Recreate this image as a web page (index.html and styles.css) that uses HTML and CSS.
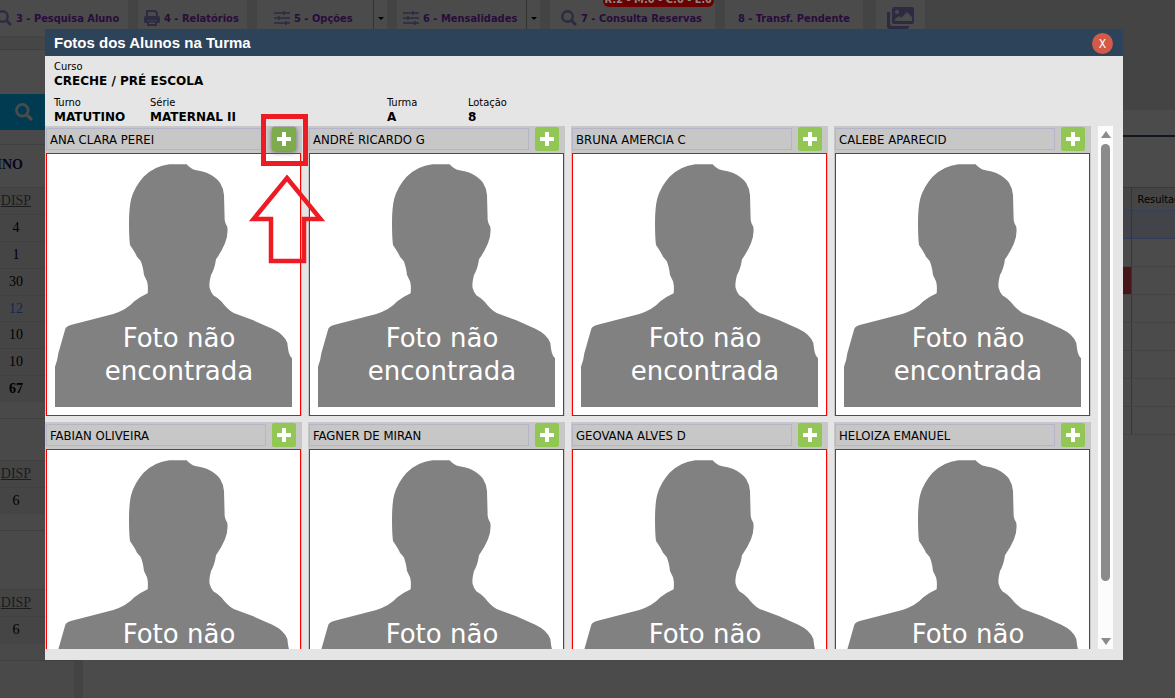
FILE: index.html
```
<!DOCTYPE html>
<html lang="pt-BR">
  <head>
    <meta charset="utf-8">
    <title>Fotos dos Alunos na Turma</title>
    <link rel="stylesheet" href="styles.css">
  </head>
  <body>
    <svg class="defs">
      <symbol id="person" viewBox="0 0 759 783">
        <path d="M367 31H419Q430 45 448 49Q464 52 479 56Q506 68 519 86Q530 104 531 123L533 198Q534 208 541 219Q544 244 534 268Q524 292 507 316Q503 345 492 363Q485 388 488 402Q491 414 499 424Q510 430 524 443Q541 466 560 477L619 499L676 524Q712 541 721 567C724 590 724 600 735 613V759H24V638Q32 618 34 598L55 524Q58 516 74 512L199 480Q240 467 262 442Q280 428 302 418Q304 395 300 382L291 363Q288 337 281 321L270 308Q264 295 249 273Q246 250 246 208Q246 160 253 133Q262 100 289 69Q322 36 367 31Z"/>
      </symbol>
      <symbol id="plus" viewBox="0 0 16 16">
        <path d="M6 1.500Q6 1 6.500 1H9.500Q10 1 10 1.500V6H14.500Q15 6 15 6.500V9.500Q15 10 14.500 10H10V14.500Q10 15 9.500 15H6.500Q6 15 6 14.500V10H1.500Q1 10 1 9.500V6.500Q1 6 1.500 6H6Z"/>
      </symbol>
      <symbol id="search" viewBox="0 0 16 16">
        <path d="M10.300 10.300L15 15" fill="none" stroke="currentColor" stroke-width="3"/>
        <circle cx="6.500" cy="6.500" r="5.200" fill="none" stroke="currentColor" stroke-width="2.400"/>
      </symbol>
      <symbol id="sliders" viewBox="0 0 16 16">
        <path d="M0 3H16M0 8H16M0 13H16M10 1V5M5 6V10M12 11V15" fill="none" stroke="currentColor" stroke-width="1.500"/>
      </symbol>
      <symbol id="print" viewBox="0 0 16 16">
        <path d="M3 7V1H11L13 3V7M4 11.500H12V15H4Z" fill="none" stroke="currentColor" stroke-width="2"/>
        <path d="M2 6H14Q16 6 16 8V13H13V10H3V13H0V8Q0 6 2 6Z"/>
      </symbol>
      <symbol id="images" viewBox="0 0 27 22">
        <path d="M0 6Q0 5 1 5H3V17Q3 19 5 19H22V20Q22 22 20 22H3Q0 22 0 19Z"/>
        <path fill-rule="evenodd" d="M7 0H25Q27 0 27 2V15Q27 17 25 17H7Q5 17 5 15V2Q5 0 7 0ZM8 14H25V10L20 5L14 11L12 9L8 12ZM10 3A2 2 0 1 0 10 7A2 2 0 1 0 10 3Z"/>
      </symbol>
    </svg>

    <nav class="toolbar">
      <button class="tool tool-search"><svg class="icon"><use href="#search"/></svg>3 - Pesquisa Aluno</button>
      <button class="tool tool-report"><svg class="icon"><use href="#print"/></svg>4 - Relatórios</button>
      <div class="split">
        <button class="tool tool-options"><svg class="icon"><use href="#sliders"/></svg>5 - Opções</button>
        <button class="caret" aria-label="Mais opções"></button>
      </div>
      <div class="split">
        <button class="tool tool-fees"><svg class="icon"><use href="#sliders"/></svg>6 - Mensalidades</button>
        <button class="caret" aria-label="Mais mensalidades"></button>
      </div>
      <button class="tool tool-reserve"><svg class="icon"><use href="#search"/></svg>7 - Consulta Reservas<span class="badge">R:2 - M:0 - C:0 - L:0</span></button>
      <button class="tool tool-transfer">8 - Transf. Pendente</button>
      <button class="tool tool-images" aria-label="Fotos"><svg class="icon-images"><use href="#images"/></svg></button>
    </nav>

    <div class="page">
      <aside class="sidebar">
        <div class="sidebar-top"></div>
        <button class="search-btn" aria-label="Pesquisar"><svg class="icon"><use href="#search"/></svg></button>
        <div class="shift"><span>MATUTINO</span></div>
        <table class="seats">
          <tr><th><a href="#">DISP</a></th></tr>
          <tr><td>4</td></tr>
          <tr><td>1</td></tr>
          <tr><td>30</td></tr>
          <tr><td class="blue">12</td></tr>
          <tr><td>10</td></tr>
          <tr><td>10</td></tr>
          <tr><td class="total">67</td></tr>
        </table>
        <div class="spacer"></div>
        <table class="seats">
          <tr><th><a href="#">DISP</a></th></tr>
          <tr><td>6</td></tr>
        </table>
        <div class="spacer spacer-tall"></div>
        <table class="seats">
          <tr><th><a href="#">DISP</a></th></tr>
          <tr><td>6</td></tr>
        </table>
        <div class="sidebar-end"></div>
      </aside>
      <main class="content">
        <div class="content-title"></div>
        <table class="results">
          <tr><th></th><th class="result-col">Resultado</th></tr>
          <tr class="selected"><td></td><td></td></tr>
          <tr><td></td><td></td></tr>
          <tr><td class="alert"></td><td></td></tr>
          <tr><td></td><td></td></tr>
          <tr><td></td><td></td></tr>
          <tr><td></td><td></td></tr>
          <tr><td></td><td></td></tr>
          <tr><td></td><td></td></tr>
        </table>
      </main>
    </div>

    <div class="overlay">
      <section class="modal" role="dialog" aria-labelledby="modalTitle">
        <header class="modal-header">
          <h1 id="modalTitle">Fotos dos Alunos na Turma</h1>
          <button class="close">X</button>
        </header>

        <dl class="info">
          <div class="info-course"><dt>Curso</dt><dd>CRECHE / PRÉ ESCOLA</dd></div>
          <div><dt>Turno</dt><dd>MATUTINO</dd></div>
          <div><dt>Série</dt><dd>MATERNAL II</dd></div>
          <div><dt>Turma</dt><dd>A</dd></div>
          <div><dt>Lotação</dt><dd>8</dd></div>
        </dl>

        <div class="photos">
          <div class="cards">
            <article class="card">
              <div class="card-head"><input type="text" value="ANA CLARA PEREI" aria-label="Aluno" readonly><button class="add active" aria-label="Adicionar foto"><svg><use href="#plus"/></svg></button></div>
              <div class="photo"><svg viewBox="0 0 759 783"><use href="#person"/></svg><p>Foto não<br>encontrada</p></div>
            </article>
            <article class="card">
              <div class="card-head"><input type="text" value="ANDRÉ RICARDO G" aria-label="Aluno" readonly><button class="add" aria-label="Adicionar foto"><svg><use href="#plus"/></svg></button></div>
              <div class="photo"><svg viewBox="0 0 759 783"><use href="#person"/></svg><p>Foto não<br>encontrada</p></div>
            </article>
            <article class="card">
              <div class="card-head"><input type="text" value="BRUNA AMERCIA C" aria-label="Aluno" readonly><button class="add" aria-label="Adicionar foto"><svg><use href="#plus"/></svg></button></div>
              <div class="photo"><svg viewBox="0 0 759 783"><use href="#person"/></svg><p>Foto não<br>encontrada</p></div>
            </article>
            <article class="card">
              <div class="card-head"><input type="text" value="CALEBE APARECID" aria-label="Aluno" readonly><button class="add" aria-label="Adicionar foto"><svg><use href="#plus"/></svg></button></div>
              <div class="photo"><svg viewBox="0 0 759 783"><use href="#person"/></svg><p>Foto não<br>encontrada</p></div>
            </article>
            <article class="card">
              <div class="card-head"><input type="text" value="FABIAN OLIVEIRA" aria-label="Aluno" readonly><button class="add" aria-label="Adicionar foto"><svg><use href="#plus"/></svg></button></div>
              <div class="photo"><svg viewBox="0 0 759 783"><use href="#person"/></svg><p>Foto não<br>encontrada</p></div>
            </article>
            <article class="card">
              <div class="card-head"><input type="text" value="FAGNER DE MIRAN" aria-label="Aluno" readonly><button class="add" aria-label="Adicionar foto"><svg><use href="#plus"/></svg></button></div>
              <div class="photo"><svg viewBox="0 0 759 783"><use href="#person"/></svg><p>Foto não<br>encontrada</p></div>
            </article>
            <article class="card">
              <div class="card-head"><input type="text" value="GEOVANA ALVES D" aria-label="Aluno" readonly><button class="add" aria-label="Adicionar foto"><svg><use href="#plus"/></svg></button></div>
              <div class="photo"><svg viewBox="0 0 759 783"><use href="#person"/></svg><p>Foto não<br>encontrada</p></div>
            </article>
            <article class="card">
              <div class="card-head"><input type="text" value="HELOIZA EMANUEL" aria-label="Aluno" readonly><button class="add" aria-label="Adicionar foto"><svg><use href="#plus"/></svg></button></div>
              <div class="photo"><svg viewBox="0 0 759 783"><use href="#person"/></svg><p>Foto não<br>encontrada</p></div>
            </article>
          </div>
          <div class="scrollbar">
            <span class="arrow-up"></span>
            <span class="thumb"></span>
            <span class="arrow-down"></span>
          </div>
        </div>

        <!-- highlight on the add button -->
        <svg class="hint" viewBox="0 0 76 154">
          <rect x="14.500" y="4.500" width="42" height="47" stroke-width="5"/>
          <path d="M38 66L71.500 107H55V149H22V107H4.500Z" stroke-width="4.500"/>
        </svg>
      </section>
    </div>
  </body>
</html>
```
FILE: styles.css
```
* {
  box-sizing: border-box;
}
body {
  margin: 0;
  height: 100vh;
  overflow: hidden;
  display: flex;
  flex-direction: column;
  font-family: "DejaVu Sans Condensed", "DejaVu Sans", sans-serif;
  font-size: 11px;
  background-color: #4b4b4b;
}
button {
  padding: 0;
  border: none;
  font-family: inherit;
  cursor: pointer;
}
.defs {
  display: none;
}
.icon {
  width: 16px;
  height: 16px;
  flex: none;
  fill: currentColor;
  color: #2e2a42;
}

/* toolbar */
.toolbar {
  display: flex;
  gap: 10px;
  height: 38px;
  flex: none;
  background-color: #444444;
}
.tool {
  position: relative;
  display: flex;
  align-items: center;
  gap: 4px;
  height: 36px;
  background-color: #4b4b4b;
  color: #2a0b3d;
  font-size: 11px;
  font-weight: bold;
  white-space: nowrap;
}
.split {
  display: flex;
}
.tool-search {
  width: 132px;
  margin-left: -4px;
}
.tool-report {
  width: 109px;
  padding-left: 6px;
}
.tool-options {
  width: 116px;
  padding-left: 17px;
}
.tool-fees {
  width: 129px;
  padding-left: 6px;
}
.tool-reserve {
  width: 165px;
  padding-left: 11px;
}
.tool-transfer {
  width: 138px;
  justify-content: center;
}
.tool-images {
  width: 49px;
  margin-left: 3px;
  justify-content: center;
}
.icon-images {
  width: 27px;
  height: 22px;
  fill: #2e2a42;
}
.caret {
  width: 14px;
  height: 36px;
  display: flex;
  align-items: center;
  justify-content: center;
  background-color: #4b4b4b;
  border-left: 1px solid #333333;
}
.caret::after {
  content: "";
  border: 3px solid transparent;
  border-top-color: #000000;
  margin-top: 3px;
}
.badge {
  position: absolute;
  right: 1px;
  top: -9px;
  height: 16px;
  padding: 0 2px;
  border-radius: 6px;
  background-color: #6b0000;
  color: #8a8a8a;
  line-height: 18px;
}

/* page behind the dialog */
.page {
  display: flex;
  flex: 1;
  min-height: 0;
}
.sidebar {
  width: 83px;
  flex: none;
  display: flex;
  flex-direction: column;
  border-right: 9px solid #434343;
  background-color: #494949;
}
.sidebar-top {
  height: 56px;
  flex: none;
  border-top: 11px solid #464646;
  box-shadow: inset 0 1px #38404a;
  background-color: #4b4b4b;
}
.search-btn {
  height: 36px;
  flex: none;
  padding-left: 15px;
  text-align: left;
  background-color: #003b52;
}
.search-btn .icon {
  color: #4b4b4b;
  display: block;
  width: 18px;
  height: 18px;
}
.shift {
  height: 57px;
  flex: none;
  padding-top: 14px;
  background: linear-gradient(#404040, #404040) 0 14px / 100% 1px no-repeat;
}
.shift span {
  display: flex;
  justify-content: flex-end;
  align-items: center;
  width: 23px;
  height: 42px;
  overflow: hidden;
  font-family: "Liberation Serif", serif;
  font-size: 14px;
  font-weight: bold;
  color: #060620;
}
.seats {
  width: 100%;
  border-collapse: collapse;
  font-family: "Liberation Serif", serif;
  font-size: 14px;
  color: #000000;
}
.seats th,
.seats td {
  height: 27px;
  padding: 0 42px 0 0;
  border-top: 1px solid #404040;
  text-align: center;
  font-weight: normal;
  background-color: #454545;
}
.seats a {
  color: #1c1c1c;
}
.seats .blue {
  height: 26px;
  color: #14284d;
}
.seats .total {
  height: 26px;
  font-weight: bold;
}
.spacer {
  height: 58px;
  flex: none;
  background: linear-gradient(#404040, #404040) 0 16px / 100% 1px no-repeat;
}
.spacer-tall {
  height: 75px;
}
.sidebar-end {
  flex: 1;
  background: linear-gradient(#404040, #404040) 0 16px / 100% 1px no-repeat;
}
.content {
  flex: 1;
  min-width: 0;
}
.content-title {
  height: 149px;
  border-top: 72px solid #444444;
  background: linear-gradient(#10161e, #10161e) 0 25px / 100% 2px no-repeat;
}
.results {
  width: 100%;
  table-layout: fixed;
  border-collapse: collapse;
  border-top: 1px solid #2f3c48;
  background-color: #4b4b4b;
}
.results th {
  height: 23px;
  padding: 0 0 0 6px;
  text-align: left;
  font-weight: normal;
  background-color: #454545;
  overflow: hidden;
  white-space: nowrap;
}
.results .result-col {
  width: 44px;
}
.results td {
  height: 28px;
  border-bottom: 1px solid #434343;
}
.results td + td,
.results th + th {
  border-left: 1px solid #353535;
}
.results .selected td {
  border-top: 1px dotted #2c3553;
  border-bottom: 1px dotted #2c3553;
  background-color: #434449;
}
.results .alert {
  background-color: #46161a;
}

/* dialog */
.overlay {
  position: fixed;
  inset: 0;
  display: flex;
  padding: 29px 52px 38px 45px;
}
.modal {
  position: relative;
  flex: 1;
  min-width: 0;
  display: flex;
  flex-direction: column;
  padding-bottom: 11px;
  background-color: #e5e5e5;
  color: #000000;
}
.modal-header {
  display: flex;
  align-items: center;
  justify-content: space-between;
  height: 27px;
  flex: none;
  padding: 0 10px 0 9px;
  background-color: #2d4359;
}
.modal-header h1 {
  margin: 0;
  font-family: "Liberation Sans", Arial, sans-serif;
  font-size: 15px;
  color: #ffffff;
}
.close {
  width: 21px;
  height: 21px;
  margin-top: 2px;
  border-radius: 50%;
  background-color: #d35a47;
  color: #ffffff;
  font-size: 12px;
}
.info {
  display: grid;
  grid-template-columns: 96px 237px 81px 1fr;
  align-content: start;
  gap: 8px 0;
  height: 70px;
  flex: none;
  margin: 0;
  padding: 4px 9px 0;
}
.info-course {
  grid-column: 1 / -1;
}
.info dt {
  line-height: 14px;
}
.info dd {
  margin: 0;
  font-family: "DejaVu Sans", sans-serif;
  font-size: 12px;
  font-weight: bold;
  line-height: 14px;
}
.photos {
  display: flex;
  flex: 1;
  min-height: 0;
  padding-right: 10px;
  overflow: hidden;
}
.cards {
  flex: 1;
  display: grid;
  grid-template-columns: repeat(4, 1fr);
  align-content: start;
  gap: 6px;
}
.card {
  min-width: 0;
  padding: 0 1px;
  background-color: #c7c7c7;
}
.card-head {
  display: flex;
  align-items: center;
  gap: 6px;
  height: 27px;
  padding: 0 5px 1px 0;
}
.card-head input {
  flex: 1;
  min-width: 0;
  height: 22px;
  padding: 0 3px;
  border: 1px solid #b4b5c8;
  background-color: transparent;
  font-family: inherit;
  font-size: 13px;
  color: #000000;
}
.add {
  display: flex;
  align-items: center;
  justify-content: center;
  width: 24px;
  height: 24px;
  border-radius: 2px;
  background-color: #92c756;
}
.add svg {
  width: 16px;
  height: 16px;
  fill: #ffffff;
}
.add.active {
  background-color: #7fab4f;
  box-shadow: 0 1px 5px #666666;
}
.photo {
  display: grid;
  border: 1px solid #ff0000;
  background-color: #ffffff;
}
.photo svg {
  grid-area: 1 / 1;
  display: block;
  width: 100%;
  fill: #818181;
}
.photo p {
  grid-area: 1 / 1;
  align-self: end;
  margin: 0;
  padding: 0 0 27px 11px;
  font-family: "DejaVu Sans", sans-serif;
  font-size: 26px;
  line-height: 33px;
  text-align: center;
  color: #ffffff;
}
.scrollbar {
  display: flex;
  flex-direction: column;
  align-items: center;
  width: 15px;
  margin-left: 7px;
  padding: 5px 0 4px;
  background-color: #fcfcfc;
}
.arrow-up,
.arrow-down {
  border: 5px solid transparent;
  border-top-width: 0;
  border-bottom: 7px solid #8b8b8b;
}
.arrow-down {
  border-top: 7px solid #8b8b8b;
  border-bottom-width: 0;
}
.thumb {
  width: 9px;
  height: 85%;
  margin: 6px 0 auto;
  border-radius: 5px;
  background-color: #8b8b8b;
}
.hint {
  position: absolute;
  left: 204px;
  top: 83px;
  width: 76px;
  height: 154px;
  fill: none;
  stroke: #ed1c24;
  pointer-events: none;
}
```
